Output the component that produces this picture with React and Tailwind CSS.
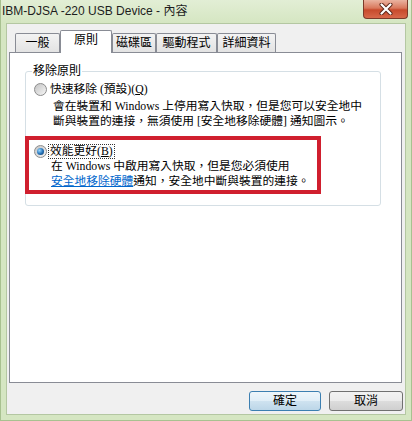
import React from 'react';

const ui = "font-['Liberation_Sans','Noto_Sans_CJK_TC',sans-serif]";
const ming = "font-['Liberation_Serif','Noto_Sans_CJK_TC',serif]";

const Radio = ({ checked }) => (
  <span className="w-[13px] h-[13px] shrink-0 rounded-full border border-[#8c8c8c] bg-linear-to-br from-[#c4c4c4] to-[#f6f6f6] flex items-center justify-center">
    {checked && (
      <span className="w-[7px] h-[7px] rounded-full bg-[radial-gradient(circle_at_35%_35%,#9ad8ff,#2a78bd_50%,#0c2f57)]" />
    )}
  </span>
);

const tabs = [
  { label: '一般', w: 'w-[45px]' },
  { label: '原則', w: 'w-[52px]', active: true },
  { label: '磁碟區', w: 'w-[44px]' },
  { label: '驅動程式', w: 'w-[61px]' },
  { label: '詳細資料', w: 'w-[59px]' },
];

export default function App() {
  return (
    <div className={`w-[412px] h-[421px] flex flex-col bg-[#d5e6c2] border-l border-r border-b border-[#a8c190] ${ui}`}>
      {/* title bar */}
      <div className="h-[23px] shrink-0 flex items-start justify-between bg-linear-to-b from-[#e2eed5] to-[#d5e6c2]">
        <span className="pl-[1px] pt-[4px] text-[12px] leading-[15px] text-[#1d1d1d]">
          IBM-DJSA -220 USB Device - 內容
        </span>
        <div className="w-[45px] h-[19px] mr-[3px] rounded-b-[4px] border border-t-0 border-[#7b3a2a] bg-[linear-gradient(#eab3a0_0%,#d9785c_45%,#c74a2c_55%,#d8684a_100%)] flex items-center justify-center">
          <svg width="14" height="12" viewBox="0 0 14 12">
            <path d="M2.5 1.5 L11.5 10.5 M11.5 1.5 L2.5 10.5" stroke="#5a2518" strokeWidth="4" strokeLinecap="round" />
            <path d="M2.5 1.5 L11.5 10.5 M11.5 1.5 L2.5 10.5" stroke="#ffffff" strokeWidth="2.2" strokeLinecap="round" />
          </svg>
        </div>
      </div>

      {/* client area */}
      <div className="flex-1 mx-[5px] mb-[5px] bg-[#f0f0f0] border border-[#b4c7a2] flex flex-col pt-[6px]">
        {/* tabs */}
        <div className="ml-[5px] pl-[3px] h-[22px] flex items-end">
          {tabs.map((t) =>
            t.active ? (
              <div
                key={t.label}
                className={`${t.w} h-[23px] -mb-px relative z-10 bg-white border border-b-0 border-[#898c95] rounded-t-[2px] flex items-start justify-center pt-[3px] text-[12px] leading-[13px] text-black`}
              >
                {t.label}
              </div>
            ) : (
              <div
                key={t.label}
                className={`${t.w} h-[19px] bg-linear-to-b from-[#f3f3f3] to-[#e3e3e3] border border-b-0 border-[#898c95] rounded-t-[2px] flex items-center justify-center pt-[1px] text-[12px] leading-[13px] text-black`}
              >
                {t.label}
              </div>
            )
          )}
        </div>

        {/* tab panel */}
        <div className="ml-[2px] w-[393px] h-[331px] shrink-0 bg-white border border-[#898c95] pt-[12px] pl-[15px]">
          <fieldset className="w-[356px] border border-[#d5dfe5] rounded-[3px] pb-[11px]">
            <legend className="ml-[6px] px-[1px] text-[12px] leading-[13px] text-black">移除原則</legend>

            <div className="pt-[5px]">
              <div className="flex items-center gap-[3px] pl-[8px] h-[13px]">
                <Radio />
                <span className={`${ming} text-[11.75px] leading-[13px] text-black`}>
                  快速移除 (預設)(<span className="underline">Q</span>)
                </span>
              </div>
              <p className={`${ming} mt-[3px] pl-[27px] text-[11.75px] leading-[15px] text-black whitespace-nowrap`}>
                會在裝置和 Windows 上停用寫入快取，但是您可以安全地中
                <br />
                斷與裝置的連接，無須使用 [安全地移除硬體] 通知圖示。
              </p>
            </div>

            {/* highlighted option */}
            <div className="mt-[7px] -ml-px w-[296px] h-[58px] border-[4px] border-[#d01f2e] pt-[4px] pl-[5px]">
              <div className="flex items-center gap-[1px] h-[15px]">
                <Radio checked />
                <span className={`${ming} border border-dotted border-[#333] px-[1px] text-[11.75px] leading-[13px] text-black`}>
                  效能更好(<span className="underline">B</span>)
                </span>
              </div>
              <p className={`${ming} pl-[17px] text-[11.75px] leading-[15px] text-black whitespace-nowrap`}>
                在 Windows 中啟用寫入快取，但是您必須使用
                <br />
                <span className="text-[#0066cc] underline">安全地移除硬體</span>通知，安全地中斷與裝置的連接。
              </p>
            </div>
          </fieldset>
        </div>

        {/* buttons */}
        <div className="mt-[8px] flex justify-end gap-[8px] pr-[2px]">
          <button className="w-[72px] h-[20px] rounded-[3px] border border-[#3c7fb1] bg-[linear-gradient(#eef6fb_0%,#e0eef7_50%,#cfe3f0_50%,#bcd6e8_100%)] text-[12px] leading-[13px] text-black">
            確定
          </button>
          <button className="w-[74px] h-[20px] rounded-[3px] border border-[#707070] bg-[linear-gradient(#f2f2f2_0%,#ebebeb_50%,#dddddd_50%,#cfcfcf_100%)] text-[12px] leading-[13px] text-black">
            取消
          </button>
        </div>
      </div>
    </div>
  );
}
